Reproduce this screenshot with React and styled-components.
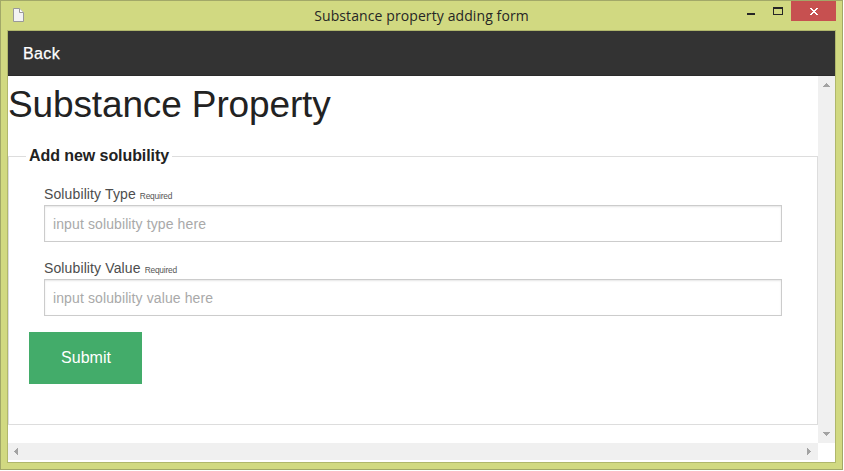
import React from "react";
import styled, { createGlobalStyle } from "styled-components";

const GlobalStyle = createGlobalStyle`
  *, *::before, *::after { box-sizing: border-box; }
  body { margin: 0; background: #fff; overflow: hidden; font-family: "Liberation Sans", Arial, sans-serif; }
`;

const Window = styled.div`
  width: 843px;
  height: 470px;
  display: flex;
  flex-direction: column;
  padding: 0 6px 6px;
  border: 1px solid #a2a868;
  background: #d1d981;
`;

const TitleBar = styled.div`
  flex: none;
  height: 29px;
  display: grid;
  grid-template-columns: 118px 1fr 118px;
`;

const TitleIcon = styled.svg`
  margin: 7px 0 0 5px;
`;

const Title = styled.div`
  justify-self: center;
  font: 14px/30px "Open Sans", "Noto Sans", sans-serif;
  letter-spacing: ${(p) => p.$tracking}px;
  white-space: nowrap;
  color: #262626;
`;

const Controls = styled.div`
  display: flex;
  justify-content: flex-end;
  align-items: flex-start;
`;

const Control = styled.button`
  width: ${(p) => p.$width}px;
  height: 20px;
  padding: 0;
  border: 0;
  display: block;
  background: ${(p) => (p.$close ? "#c75050" : "transparent")};
  svg { display: block; }
`;

const Frame = styled.div`
  flex: 1;
  display: flex;
  flex-direction: column;
  border: 1px solid #b0b76c;
  background: #fff;
`;

const NavBar = styled.nav`
  flex: none;
  height: 45px;
  padding-left: 15px;
  background: #333;
  border-bottom: 1px solid #2b2b2b;
`;

const BackLink = styled.a`
  display: inline-block;
  font-size: 16px;
  line-height: 45px;
  letter-spacing: 0.4px;
  color: #fff;
  -webkit-text-stroke: 0.25px #fff;
`;

const Viewport = styled.div`
  flex: none;
  height: 384px;
  display: grid;
  grid-template: 367px 17px / 810px 17px;
`;

const Page = styled.main`
  overflow: hidden;
`;

const Heading = styled.h1`
  margin: 0;
  height: 70px;
  font-size: 37px;
  font-weight: 400;
  line-height: 58px;
  letter-spacing: ${(p) => p.$tracking}px;
  white-space: nowrap;
  color: #222;
`;

const Fieldset = styled.fieldset`
  margin: 0;
  height: 279px;
  padding: 0 20px;
  border: 1px solid #ddd;
`;

const Legend = styled.legend`
  margin: 0 0 0 -3px;
  padding: 0 3px;
  height: 20px;
  font-size: 16px;
  font-weight: 700;
  line-height: 19px;
  letter-spacing: -0.07px;
  color: #222;
  white-space: nowrap;
`;

const Field = styled.label`
  display: block;
  height: 74px;
  margin: 0 15px;
`;

const FieldLabel = styled.span`
  display: block;
  height: 21px;
  font-size: 14px;
  line-height: 21px;
  letter-spacing: 0.12px;
  color: #4d4d4d;
  white-space: nowrap;
`;

const Required = styled.small`
  font-size: 8.4px;
  letter-spacing: -0.22px;
  color: #555;
`;

const Input = styled.input`
  display: block;
  width: 100%;
  height: 37px;
  padding: 1px 8px 0;
  border: 1px solid #ccc;
  border-radius: 0;
  box-shadow: inset 0 1px 2px rgba(0, 0, 0, 0.1);
  background: #fff;
  font: 14px "Liberation Sans", Arial, sans-serif;
  outline: 0;
  &::placeholder { color: #a9a9a9; opacity: 1; letter-spacing: 0.11px; }
`;

const Fields = styled.div`
  padding-top: 18px;
`;

const Submit = styled.button`
  display: block;
  width: 113px;
  height: 52px;
  padding: 0 0 0 1px;
  border: 0;
  background: #43ac6a;
  color: #fff;
  font: 16px "Liberation Sans", Arial, sans-serif;
`;

const ScrollTrack = styled.div`
  display: flex;
  flex-direction: ${(p) => (p.$vertical ? "column" : "row")};
  justify-content: space-between;
  background: #f0f0f0;
  svg { display: block; fill: #a3a3a3; }
`;

const arrows = {
  up: "M8 7h1v1h1v1h1v1h1v1H5v-1h1V9h1V8h1z",
  down: "M5 6h7v1h-1v1h-1v1H9v1H8V9H7V8H6V7H5z",
  left: "M10 5v7H9v-1H8v-1H7V9H6V8h1V7h1V6h1V5z",
  right: "M6 5h1v1h1v1h1v1h1v1H9v1H8v1H7v1H6z",
};

const Arrow = ({ dir }) => (
  <svg width="17" height="17" shapeRendering="crispEdges">
    <path d={arrows[dir]} />
  </svg>
);

const fields = [
  { label: "Solubility Type", placeholder: "input solubility type here" },
  { label: "Solubility Value", placeholder: "input solubility value here" },
];

export default function App() {
  return (
    <>
      <GlobalStyle />
      <Window>
        <TitleBar>
          <TitleIcon width="14" height="16">
            <path d="M1.5.5h6l4 4v9h-10z" fill="#f3f3f3" stroke="#999" />
            <path d="M7.5.5v4h4" fill="#fff" stroke="#999" />
          </TitleIcon>
          <Title $tracking={0.1}>Substance property adding form</Title>
          <Controls>
            <Control $width={27} aria-label="Minimize">
              <svg width="27" height="20"><path d="M10 12h8v2h-8z" fill="#262626" /></svg>
            </Control>
            <Control $width={27} aria-label="Maximize">
              <svg width="27" height="20" shapeRendering="crispEdges">
                <path fillRule="evenodd" d="M9 6h10v8H9zM10 8h8v5h-8z" fill="#262626" />
              </svg>
            </Control>
            <Control $width={45} $close aria-label="Close">
              <svg width="45" height="20" shapeRendering="crispEdges">
                <path
                  d="M19 7h2v1h1v1h2V8h1V7h2v1h-1v1h-1v1h-1v1h1v1h1v1h1v1h-2v-1h-1v-1h-2v1h-1v1h-2v-1h1v-1h1v-1h1v-1h-1V9h-1V8h-1z"
                  fill="#fff"
                />
              </svg>
            </Control>
          </Controls>
        </TitleBar>
        <Frame>
          <NavBar><BackLink>Back</BackLink></NavBar>
          <Viewport>
            <Page>
              <Heading $tracking={-0.13}>Substance Property</Heading>
              <Fieldset>
                <Legend>Add new solubility</Legend>
                <Fields>
                  {fields.map((f) => (
                    <Field key={f.label}>
                      <FieldLabel>{f.label} <Required>Required</Required></FieldLabel>
                      <Input placeholder={f.placeholder} />
                    </Field>
                  ))}
                </Fields>
                <Submit>Submit</Submit>
              </Fieldset>
            </Page>
            <ScrollTrack $vertical><Arrow dir="up" /><Arrow dir="down" /></ScrollTrack>
            <ScrollTrack><Arrow dir="left" /><Arrow dir="right" /></ScrollTrack>
          </Viewport>
        </Frame>
      </Window>
    </>
  );
}
